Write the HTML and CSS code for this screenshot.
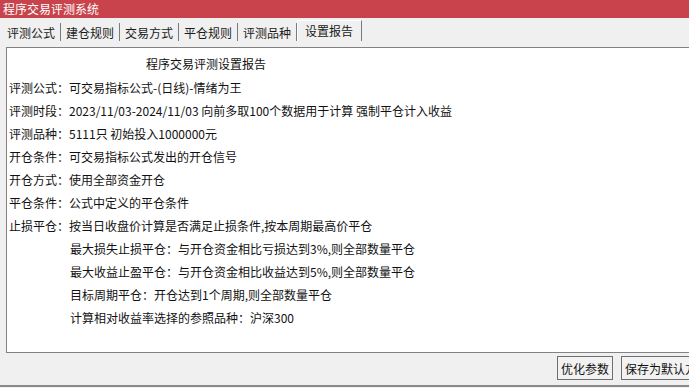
FILE: index.html
```html
<!DOCTYPE html>
<html lang="zh-CN">
<head>
    <meta charset="UTF-8">
    <meta name="viewport" content="width=device-width, initial-scale=1.0">
    <title>程序交易评测系统</title>
    <link rel="stylesheet" href="styles.css">
</head>
<body>
<div class="window">
    <div class="titlebar">程序交易评测系统</div>

    <div class="tabs">
        <div class="tab">评测公式</div>
        <div class="tab">建仓规则</div>
        <div class="tab">交易方式</div>
        <div class="tab">平仓规则</div>
        <div class="tab">评测品种</div>
        <div class="tab active">设置报告</div>
    </div>

    <div class="report">
        <div class="report-title">程序交易评测设置报告</div>
        <div class="row">评测公式：可交易指标公式-(日线)-情绪为王</div>
        <div class="row">评测时段：2023/11/03-2024/11/03 向前多取100个数据用于计算 强制平仓计入收益</div>
        <div class="row">评测品种：5111只 初始投入1000000元</div>
        <div class="row">开仓条件：可交易指标公式发出的开仓信号</div>
        <div class="row">开仓方式：使用全部资金开仓</div>
        <div class="row">平仓条件：公式中定义的平仓条件</div>
        <div class="row">止损平仓：按当日收盘价计算是否满足止损条件,按本周期最高价平仓</div>
        <div class="row sub">最大损失止损平仓：与开仓资金相比亏损达到3%,则全部数量平仓</div>
        <div class="row sub">最大收益止盈平仓：与开仓资金相比收益达到5%,则全部数量平仓</div>
        <div class="row sub">目标周期平仓：开仓达到1个周期,则全部数量平仓</div>
        <div class="row sub">计算相对收益率选择的参照品种：沪深300</div>
    </div>

    <div class="footer">
        <button class="btn">优化参数</button>
        <button class="btn">保存为默认方案</button>
    </div>
</div>
</body>
</html>
```

FILE: styles.css
```css
html, body {
    margin: 0;
    padding: 0;
}
body {
    width: 689px;
    height: 388px;
    overflow: hidden;
    background-color: #f0f0f0;
    font-family: "Noto Sans CJK SC", "Noto Sans", sans-serif;
    font-size: 12px;
    color: #111;
}
.window {
    width: 760px;
    height: 387px;
    border-bottom: 2px solid #8a8a8a;
    box-sizing: border-box;
}
.titlebar {
    height: 18px;
    line-height: 17px;
    padding-left: 3px;
    background-color: #c8434b;
    color: #ffffff;
}
.tabs {
    display: flex;
    align-items: flex-end;
    height: 29px;
    padding-left: 2px;
}
.tab {
    height: 18px;
    line-height: 19px;
    padding: 0 5px;
    margin-bottom: 6px;
    border-right: 1px solid #7a7a7a;
    color: #1a1a1a;
}
.tab.active {
    height: 21px;
    line-height: 20px;
    padding: 0 8px 0 7px;
    border-left: 1px solid #ffffff;
    border-top: 1px solid #ffffff;
    box-sizing: border-box;
    margin-bottom: 6px;
}
.report {
    margin-left: 6px;
    height: 306px;
    box-sizing: border-box;
    border: 1px solid #828282;
    background-color: #ffffff;
    padding: 4px 0 0 2px;
}
.report-title {
    line-height: 23px;
    padding-left: 137px;
    margin-bottom: 1px;
}
.row {
    line-height: 23px;
    white-space: nowrap;
}
.row.sub {
    padding-left: 61px;
}
.footer {
    display: flex;
    gap: 8px;
    padding: 3px 0 0 557px;
    height: 32px;
    box-sizing: border-box;
}
.btn {
    height: 24px;
    padding: 0 3px;
    font-family: inherit;
    font-size: 12px;
    color: #111;
    background-color: #f2f2f2;
    border: 1px solid #6f6f6f;
    border-radius: 0;
    white-space: nowrap;
}
```
